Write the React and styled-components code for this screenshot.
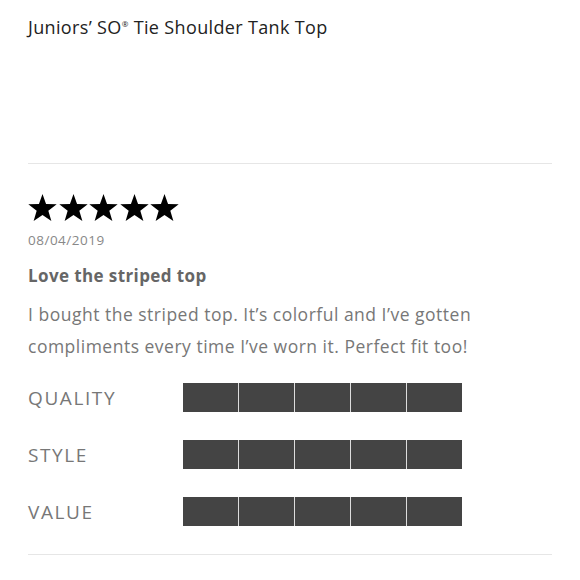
import React from 'react';
import styled, { createGlobalStyle } from 'styled-components';

const GlobalStyle = createGlobalStyle`
  html, body {
    margin: 0;
    padding: 0;
    background: #fff;
  }
  body {
    font-family: "Open Sans", Lato, Arial, sans-serif;
  }
`;

const ratings = [
  { label: 'QUALITY', value: 5 },
  { label: 'STYLE', value: 5 },
  { label: 'VALUE', value: 5 },
];

const Star = () => (
  <svg width="29" height="27" viewBox="0.8 0.6 22.4 21.3">
    <path d="M12 0.6 L14.8 8.4 L23.2 8.6 L16.6 13.8 L19 21.9 L12 17.2 L5 21.9 L7.4 13.8 L0.8 8.6 L9.2 8.4 Z" fill="#000" />
  </svg>
);

const App = () => {
  return (
    <Page>
      <GlobalStyle />
      <Header>
        <ProductName>Juniors’ SO<Reg>®</Reg> Tie Shoulder Tank Top</ProductName>
      </Header>
      <Divider />
      <Review>
        <Stars>
          {[0, 1, 2, 3, 4].map((i) => <Star key={i} />)}
        </Stars>
        <ReviewDate>08/04/2019</ReviewDate>
        <ReviewTitle>Love the striped top</ReviewTitle>
        <ReviewBody>
          I bought the striped top. It’s colorful and I’ve gotten compliments every time I’ve worn it. Perfect fit too!
        </ReviewBody>
        <Ratings>
          {ratings.map(({ label, value }) => (
            <RatingRow key={label}>
              <RatingLabel>{label}</RatingLabel>
              <Bar>
                {[1, 2, 3, 4, 5].map((n) => (
                  <Segment key={n} filled={n <= value} />
                ))}
              </Bar>
            </RatingRow>
          ))}
        </Ratings>
      </Review>
      <Divider />
    </Page>
  );
};

const Page = styled.div`
  padding: 0 28px;
  width: 524px;
`;

const Header = styled.div`
  height: 163px;
  padding-top: 15px;
  box-sizing: border-box;
`;

const ProductName = styled.h1`
  margin: 0;
  font-size: 18px;
  line-height: 24px;
  font-weight: 400;
  color: #222;
  letter-spacing: 0.35px;
`;

const Reg = styled.sup`
  font-size: 8px;
  vertical-align: 7px;
  line-height: 0;
`;

const Divider = styled.div`
  height: 1px;
  background: #e6e6e6;
`;

const Review = styled.div`
  padding-top: 30px;
  padding-bottom: 28px;
`;

const Stars = styled.div`
  display: flex;
  gap: 1.5px;
  height: 28px;
`;

const ReviewDate = styled.div`
  margin-top: 8px;
  font-size: 13.5px;
  line-height: 20px;
  color: #888;
  letter-spacing: 0.5px;
`;

const ReviewTitle = styled.div`
  margin-top: 15px;
  font-size: 17px;
  line-height: 22px;
  font-weight: 700;
  color: #666;
  letter-spacing: 0.4px;
`;

const ReviewBody = styled.p`
  margin: 11px 0 0;
  max-width: 500px;
  font-size: 17.5px;
  line-height: 32px;
  color: #777;
  letter-spacing: 0.5px;
`;

const Ratings = styled.div`
  display: flex;
  flex-direction: column;
  gap: 28px;
  margin-top: 21px;
`;

const RatingRow = styled.div`
  display: flex;
  align-items: center;
  height: 29px;
`;

const RatingLabel = styled.div`
  width: 155px;
  font-size: 19px;
  color: #777;
  letter-spacing: 1.6px;
`;

const Bar = styled.div`
  display: flex;
  gap: 1px;
  background: #ddd;
  height: 29px;
`;

const Segment = styled.div`
  width: 55px;
  height: 100%;
  background: ${(p) => (p.filled ? '#444' : '#eee')};
`;

export default App;
